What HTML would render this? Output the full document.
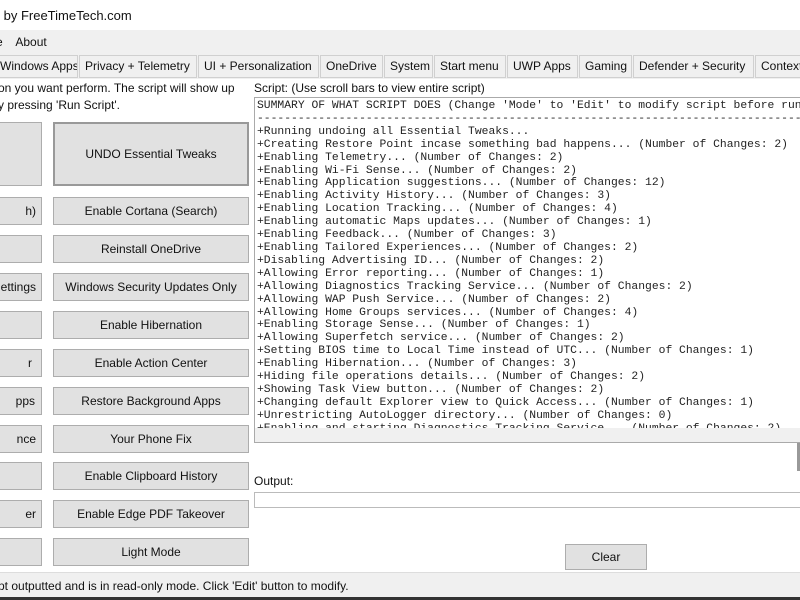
<!DOCTYPE html><html><head><style>
body{margin:0;width:800px;height:600px;overflow:hidden;background:#fff;font-family:"Liberation Sans",sans-serif;font-size:12px;color:#111;position:relative}
.a{position:absolute;white-space:nowrap}
.btn{position:absolute;background:#e1e1e1;border:1px solid #adadad;box-sizing:border-box;text-align:center;font-size:12px;display:flex;align-items:center;justify-content:center;white-space:nowrap;overflow:hidden}
.tab{position:absolute;top:55px;height:23px;border:1px solid #d0d0d0;background:#f0f0f0;box-sizing:border-box;padding:0 5px;line-height:21px;font-size:12px;white-space:nowrap;overflow:hidden}
pre{margin:0;font-family:"Liberation Mono",monospace;font-size:11.35px;line-height:12.9px;color:#222}
</style></head><body>
<div class="a" style="left:0;top:8px;font-size:13px">&nbsp;by FreeTimeTech.com</div>
<div class="a" style="left:0;top:30px;width:800px;height:23px;background:#f0f0f0"></div>
<div class="a" style="left:-4px;top:35px">e&nbsp;&nbsp;&nbsp; About</div>
<div class="a" style="left:0;top:53px;width:800px;height:26px;background:#f0f0f0"></div>
<div class="tab" style="left:-6px;width:84px">Windows Apps</div>
<div class="tab" style="left:79px;width:118px">Privacy + Telemetry</div>
<div class="tab" style="left:198px;width:121px">UI + Personalization</div>
<div class="tab" style="left:320px;width:63px">OneDrive</div>
<div class="tab" style="left:384px;width:49px">System</div>
<div class="tab" style="left:434px;width:72px">Start menu</div>
<div class="tab" style="left:507px;width:71px">UWP Apps</div>
<div class="tab" style="left:579px;width:53px">Gaming</div>
<div class="tab" style="left:633px;width:121px">Defender + Security</div>
<div class="tab" style="left:755px;width:60px">Context</div>
<div class="a" style="left:-2px;top:81px">on you want perform. The script will show up</div>
<div class="a" style="left:-2px;top:98px">y pressing 'Run Script'.</div>
<div class="a" style="left:254px;top:81px">Script: (Use scroll bars to view entire script)</div>
<div class="btn" style="left:-4px;top:122px;width:46px;height:64px"></div>
<div class="btn" style="left:53px;top:122px;width:196px;height:64px;border:2px solid #999">UNDO Essential Tweaks</div>
<div class="btn" style="left:-4px;top:197px;width:46px;height:28px;justify-content:flex-end;padding-right:5px">h)</div>
<div class="btn" style="left:53px;top:197px;width:196px;height:28px">Enable Cortana (Search)</div>
<div class="btn" style="left:-4px;top:235px;width:46px;height:28px"></div>
<div class="btn" style="left:53px;top:235px;width:196px;height:28px">Reinstall OneDrive</div>
<div class="btn" style="left:-4px;top:273px;width:46px;height:28px;justify-content:flex-end;padding-right:5px">ettings</div>
<div class="btn" style="left:53px;top:273px;width:196px;height:28px">Windows Security Updates Only</div>
<div class="btn" style="left:-4px;top:311px;width:46px;height:28px"></div>
<div class="btn" style="left:53px;top:311px;width:196px;height:28px">Enable Hibernation</div>
<div class="btn" style="left:-4px;top:349px;width:46px;height:28px;justify-content:flex-end;padding-right:9px">r</div>
<div class="btn" style="left:53px;top:349px;width:196px;height:28px">Enable Action Center</div>
<div class="btn" style="left:-4px;top:387px;width:46px;height:28px;justify-content:flex-end;padding-right:6px">pps</div>
<div class="btn" style="left:53px;top:387px;width:196px;height:28px">Restore Background Apps</div>
<div class="btn" style="left:-4px;top:425px;width:46px;height:28px;justify-content:flex-end;padding-right:5px">nce</div>
<div class="btn" style="left:53px;top:425px;width:196px;height:28px">Your Phone Fix</div>
<div class="btn" style="left:-4px;top:462px;width:46px;height:28px"></div>
<div class="btn" style="left:53px;top:462px;width:196px;height:28px">Enable Clipboard History</div>
<div class="btn" style="left:-4px;top:500px;width:46px;height:28px;justify-content:flex-end;padding-right:5px">er</div>
<div class="btn" style="left:53px;top:500px;width:196px;height:28px">Enable Edge PDF Takeover</div>
<div class="btn" style="left:-4px;top:538px;width:46px;height:28px"></div>
<div class="btn" style="left:53px;top:538px;width:196px;height:28px">Light Mode</div>
<div class="a" style="left:254px;top:97px;width:560px;height:344px;border:1px solid #aaa;overflow:hidden;background:#fff">
<pre style="padding:2px 0 0 2px">SUMMARY OF WHAT SCRIPT DOES (Change 'Mode' to 'Edit' to modify script before run
--------------------------------------------------------------------------------
+Running undoing all Essential Tweaks...
+Creating Restore Point incase something bad happens... (Number of Changes: 2)
+Enabling Telemetry... (Number of Changes: 2)
+Enabling Wi-Fi Sense... (Number of Changes: 2)
+Enabling Application suggestions... (Number of Changes: 12)
+Enabling Activity History... (Number of Changes: 3)
+Enabling Location Tracking... (Number of Changes: 4)
+Enabling automatic Maps updates... (Number of Changes: 1)
+Enabling Feedback... (Number of Changes: 3)
+Enabling Tailored Experiences... (Number of Changes: 2)
+Disabling Advertising ID... (Number of Changes: 2)
+Allowing Error reporting... (Number of Changes: 1)
+Allowing Diagnostics Tracking Service... (Number of Changes: 2)
+Allowing WAP Push Service... (Number of Changes: 2)
+Allowing Home Groups services... (Number of Changes: 4)
+Enabling Storage Sense... (Number of Changes: 1)
+Allowing Superfetch service... (Number of Changes: 2)
+Setting BIOS time to Local Time instead of UTC... (Number of Changes: 1)
+Enabling Hibernation... (Number of Changes: 3)
+Hiding file operations details... (Number of Changes: 2)
+Showing Task View button... (Number of Changes: 2)
+Changing default Explorer view to Quick Access... (Number of Changes: 1)
+Unrestricting AutoLogger directory... (Number of Changes: 0)
+Enabling and starting Diagnostics Tracking Service... (Number of Changes: 2)</pre>
<div class="a" style="left:0;top:330px;width:560px;height:14px;background:#f0f0f0"></div>
</div>
<div class="a" style="left:797px;top:443px;width:3px;height:28px;background:#999"></div>
<div class="a" style="left:254px;top:474px">Output:</div>
<div class="a" style="left:254px;top:492px;width:560px;height:14px;border:1px solid #bbb;background:#fff"></div>
<div class="btn" style="left:565px;top:544px;width:82px;height:26px">Clear</div>
<div class="a" style="left:0;top:572px;width:800px;height:25px;background:#f0f0f0;border-top:1px solid #ddd"></div>
<div class="a" style="left:-2px;top:579px">pt outputted and is in read-only mode. Click 'Edit' button to modify.</div>
<div class="a" style="left:0;top:597px;width:800px;height:3px;background:#333"></div>
</body></html>
